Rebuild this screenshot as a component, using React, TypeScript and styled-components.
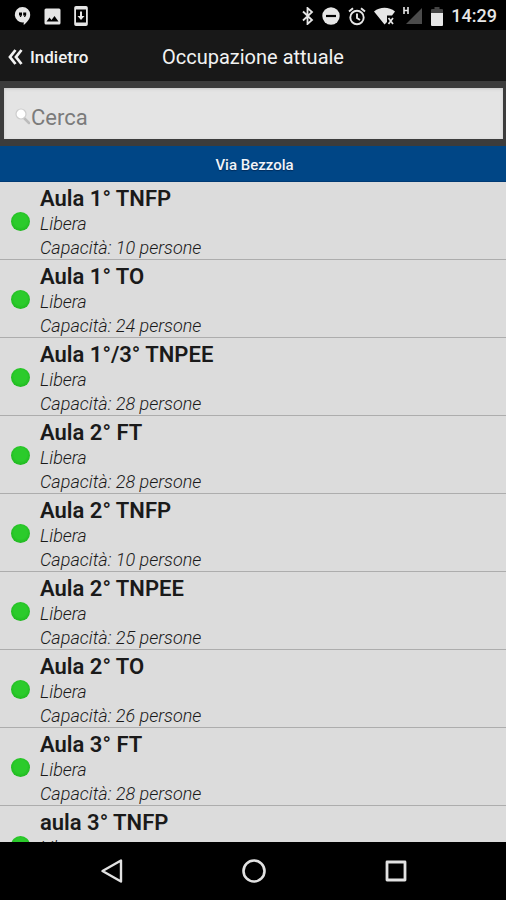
import React from "react";
import styled, { createGlobalStyle } from "styled-components";

const GlobalStyle = createGlobalStyle`
  * { box-sizing: border-box; }
  body { margin: 0; background: #000; font-family: Roboto, "Liberation Sans", sans-serif; }
`;

const Screen = styled.div`
  display: flex;
  flex-direction: column;
  height: 100vh;
  overflow: hidden;
  background: #dcdcdc;
  color: #1a1a1a;
`;

const StatusBar = styled.div`
  display: flex;
  flex: none;
  align-items: center;
  justify-content: space-between;
  height: 30px;
  padding: 2px 9px 0 14px;
  background: #000;
  color: #e6e6e6;
`;

const StatusGroup = styled.div<{ $gap: number }>`
  display: flex;
  align-items: center;
  gap: ${(p) => p.$gap}px;
`;

const Clock = styled.span`
  font-size: 18px;
  font-weight: 500;
  line-height: 20px;
`;

const TitleBar = styled.header`
  display: grid;
  flex: none;
  grid-template-columns: 1fr auto 1fr;
  align-items: center;
  height: 51px;
  padding: 2px 8px 0;
  background: #181818;
  color: #f2f2f2;
`;

const BackButton = styled.button`
  display: flex;
  align-items: center;
  justify-self: start;
  gap: 7px;
  padding: 0;
  border: 0;
  background: none;
  color: inherit;
  font: 500 17px/24px Roboto, sans-serif;
`;

const Title = styled.h1`
  margin: 0;
  font-size: 20px;
  font-weight: 400;
  line-height: 24px;
`;

const SearchArea = styled.div`
  flex: none;
  padding: 7px 3px 7px 4px;
  background: #3c3c3c;
`;

const SearchField = styled.label`
  display: flex;
  align-items: center;
  height: 51px;
  padding: 8px 10px 0 11px;
  background: #e4e4e4;
  box-shadow: inset 0 1px 3px #c8c8c8;
`;

const SearchInput = styled.input`
  flex: 1;
  min-width: 0;
  padding: 0;
  border: 0;
  outline: 0;
  background: none;
  color: #333;
  font: 400 22px/30px Roboto, sans-serif;
  &::placeholder { color: #7b7b7b; opacity: 1; }
`;

const SectionTitle = styled.h2`
  flex: none;
  margin: 0;
  padding: 8px 3px 4px 6px;
  background: #004686;
  border-bottom: 1px solid #003a74;
  color: #f0f4fa;
  font-size: 15px;
  font-weight: 500;
  line-height: 23px;
  text-align: center;
  text-shadow: 0 1px 1px #002c5c;
`;

const RoomList = styled.ul`
  flex: 1;
  min-height: 0;
  margin: 0;
  padding: 0;
  overflow: hidden;
  list-style: none;
`;

const RoomRow = styled.li`
  display: flex;
  align-items: center;
  gap: 10px;
  padding: 0 11px;
  box-shadow: inset 0 -1px #adadad;
`;

const RoomText = styled.div`
  padding-top: 3px;
`;

const StatusDot = styled.span`
  flex: none;
  width: 19px;
  height: 19px;
  border-radius: 50%;
  background: radial-gradient(circle at 50% 45%, #2bcb2b 45%, #20b820 75%, #189c18);
`;

const RoomName = styled.h3`
  margin: 0;
  font-size: 22px;
  font-weight: 600;
  line-height: 27px;
`;

const RoomDetail = styled.p`
  margin: 0;
  color: #1a1a1a;
  font-size: 18px;
  font-style: italic;
  font-weight: 300;
  line-height: 24px;
`;

const NavBar = styled.nav`
  display: flex;
  flex: none;
  align-items: center;
  justify-content: center;
  gap: 110px;
  height: 58px;
  padding-left: 2px;
  background: #000;
`;

const NavButton = styled.button`
  display: flex;
  padding: 0;
  border: 0;
  background: none;
  color: #e2e2e2;
`;

const rooms = [
  { name: "Aula 1° TNFP", capacity: 10 },
  { name: "Aula 1° TO", capacity: 24 },
  { name: "Aula 1°/3° TNPEE", capacity: 28 },
  { name: "Aula 2° FT", capacity: 28 },
  { name: "Aula 2° TNFP", capacity: 10 },
  { name: "Aula 2° TNPEE", capacity: 25 },
  { name: "Aula 2° TO", capacity: 26 },
  { name: "Aula 3° FT", capacity: 28 },
  { name: "aula 3° TNFP", capacity: 28 },
];

const NotificationIcons = () => (
  <StatusGroup $gap={13}>
    <svg width="17" height="20" viewBox="0 0 17 20" fill="currentColor">
      <path fillRule="evenodd" d="M8.500 1a7.700 7.700 0 0 1 7.700 7.700c0 4-3 7.500-6.500 10.300v-2.700A7.700 7.700 0 1 1 8.500 1ZM5 6.500v3h1.500L5.700 11h1.200L8 9V6.500Zm4.200 0v3h1.500L9.900 11h1.200l1.100-2V6.500Z" />
    </svg>
    <svg width="17" height="17" viewBox="0 0 17 17" fill="currentColor">
      <path fillRule="evenodd" d="M2 .5h13A1.500 1.500 0 0 1 16.500 2v13a1.500 1.500 0 0 1-1.500 1.500H2A1.500 1.500 0 0 1 .5 15V2A1.500 1.500 0 0 1 2 .5ZM2.500 13.500h12l-4-5.500-3 4-2-2.500Z" />
    </svg>
    <svg width="14" height="20" viewBox="0 0 14 20" fill="currentColor">
      <path fillRule="evenodd" d="M2 0h10a1.800 1.800 0 0 1 1.800 1.800v16.400A1.800 1.800 0 0 1 12 20H2A1.800 1.800 0 0 1 .2 18.200V1.800A1.800 1.800 0 0 1 2 0Zm0 3.500v13h10v-13ZM6 5.500h2v4.500h2.500L7 14 3.500 10H6Z" />
    </svg>
  </StatusGroup>
);

const SystemIcons = () => (
  <StatusGroup $gap={8}>
    <svg width="12" height="18" viewBox="0 0 12 18" fill="none" stroke="currentColor" strokeWidth="1.800">
      <path d="m1 4.500 9 8.500-4.500 4V1L10 5l-9 8.500" />
    </svg>
    <svg width="18" height="18" viewBox="0 0 18 18">
      <circle cx="9" cy="9" r="8.700" fill="currentColor" />
      <path d="M4 9h10" stroke="#000" strokeWidth="2.200" />
    </svg>
    <svg width="18" height="19" viewBox="0 0 18 19" fill="none" stroke="currentColor" strokeWidth="1.900">
      <circle cx="9" cy="10.500" r="6.700" />
      <path d="M9 6.500v4.500l3 2M1 4.500l4-3.300M17 4.500l-4-3.300" />
    </svg>
    <svg width="21" height="18" viewBox="0 0 21 18" fill="currentColor">
      <path d="M0 4.500C6-.5 15-.5 21 4.500l-3 4h-5v6.500l-2.500 2.500Z" />
      <path d="m14.500 11 4.500 6m0-6-4.500 6" stroke="currentColor" strokeWidth="1.700" />
    </svg>
    <svg width="20" height="20" viewBox="0 0 20 20">
      <path d="M19 2v16H3Z" fill="#4b4b4b" />
      <path d="M1 1v7m4-7v7M1 4.500h4" fill="none" stroke="currentColor" strokeWidth="1.600" />
    </svg>
    <svg width="12" height="19" viewBox="0 0 12 19">
      <path d="M3.500 0h5v2H11a1 1 0 0 1 1 1v3H0V3a1 1 0 0 1 1-1h2.500Z" fill="#444" />
      <path d="M0 6h12v12a1 1 0 0 1-1 1H1a1 1 0 0 1-1-1Z" fill="currentColor" />
    </svg>
    <Clock>14:29</Clock>
  </StatusGroup>
);

export default function App() {
  return (
    <Screen>
      <GlobalStyle />
      <StatusBar>
        <NotificationIcons />
        <SystemIcons />
      </StatusBar>
      <TitleBar>
        <BackButton type="button">
          <svg width="15" height="16" viewBox="0 0 15 16" fill="none" stroke="currentColor" strokeWidth="2.800">
            <path d="M7.500 1 2 8l5.500 7M13.500 1 8 8l5.500 7" />
          </svg>
          Indietro
        </BackButton>
        <Title>Occupazione attuale</Title>
      </TitleBar>
      <SearchArea>
        <SearchField>
          <svg width="16" height="20" viewBox="0 0 16 20" aria-hidden="true">
            <path d="m9 10 5 5" stroke="#bcbcbc" strokeWidth="2.500" strokeLinecap="round" />
            <circle cx="6" cy="6" r="5" fill="#fff" stroke="#cdcdcd" strokeWidth="1.200" />
          </svg>
          <SearchInput type="search" placeholder="Cerca" aria-label="Cerca" />
        </SearchField>
      </SearchArea>
      <SectionTitle>Via Bezzola</SectionTitle>
      <RoomList>
        {rooms.map((room) => (
          <RoomRow key={room.name}>
            <StatusDot />
            <RoomText>
              <RoomName>{room.name}</RoomName>
              <RoomDetail>Libera</RoomDetail>
              <RoomDetail>Capacità: {room.capacity} persone</RoomDetail>
            </RoomText>
          </RoomRow>
        ))}
      </RoomList>
      <NavBar>
        <NavButton type="button" aria-label="Indietro">
          <svg width="32" height="26" viewBox="0 0 32 26" fill="none" stroke="currentColor" strokeWidth="2.400" strokeLinejoin="round">
            <path d="M25 2.500v21L6.500 13Z" />
          </svg>
        </NavButton>
        <NavButton type="button" aria-label="Home">
          <svg width="32" height="26" viewBox="0 0 32 26" fill="none" stroke="currentColor" strokeWidth="2.600">
            <circle cx="16" cy="13" r="10.500" />
          </svg>
        </NavButton>
        <NavButton type="button" aria-label="Recenti">
          <svg width="32" height="26" viewBox="0 0 32 26" fill="none" stroke="currentColor" strokeWidth="2.800" strokeLinejoin="round">
            <path d="M7 4h18v18H7Z" />
          </svg>
        </NavButton>
      </NavBar>
    </Screen>
  );
}
